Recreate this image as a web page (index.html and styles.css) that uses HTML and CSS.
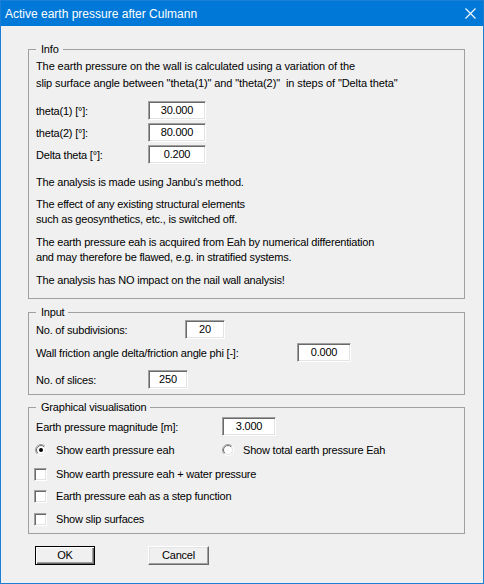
FILE: index.html
```html
<!DOCTYPE html>
<html>
<head>
<meta charset="utf-8">
<title>Active earth pressure after Culmann</title>
<link rel="stylesheet" href="styles.css">
</head>
<body>
<svg class="defs" width="0" height="0" aria-hidden="true">
  <defs>
    <linearGradient id="rOuter" x1="0" y1="0" x2="1" y2="1">
      <stop offset="0.45" stop-color="#a0a0a0"/>
      <stop offset="0.55" stop-color="#ffffff"/>
    </linearGradient>
    <linearGradient id="rInner" x1="0" y1="0" x2="1" y2="1">
      <stop offset="0.45" stop-color="#696969"/>
      <stop offset="0.55" stop-color="#e3e3e3"/>
    </linearGradient>
  </defs>
</svg>
<div class="window">
  <div class="titlebar">
    <span class="title">Active earth pressure after Culmann</span>
    <svg class="close" width="11" height="11" viewBox="0 0 11 11"><path d="M0.5 0.5L10.5 10.5M10.5 0.5L0.5 10.5" stroke="#fff" stroke-width="1.1" fill="none"/></svg>
  </div>
  <div class="client">
    <fieldset class="group info">
      <legend>Info</legend>
      <div class="para first">The earth pressure on the wall is calculated using a variation of the<br>slip surface angle between "theta(1)" and "theta(2)" &nbsp;in steps of "Delta theta"</div>
      <div class="row r1"><span class="label w112">theta(1) [°]:</span><span class="edit w58">30.000</span></div>
      <div class="row r2"><span class="label w112">theta(2) [°]:</span><span class="edit w58">80.000</span></div>
      <div class="row r2"><span class="label w112">Delta theta [°]:</span><span class="edit w58">0.200</span></div>
      <div class="para p-janbu">The analysis is made using Janbu's method.</div>
      <div class="para p7">The effect of any existing structural elements<br>such as geosynthetics, etc., is switched off.</div>
      <div class="para p8">The earth pressure eah is acquired from Eah by numerical differentiation<br>and may therefore be flawed, e.g. in stratified systems.</div>
      <div class="para p8">The analysis has NO impact on the nail wall analysis!</div>
    </fieldset>

    <fieldset class="group input">
      <legend>Input</legend>
      <div class="row i1"><span class="label w149">No. of subdivisions:</span><span class="edit w40">20</span></div>
      <div class="row i2"><span class="label w261">Wall friction angle delta/friction angle phi [-]:</span><span class="edit w54">0.000</span></div>
      <div class="row i3"><span class="label w112">No. of slices:</span><span class="edit w40">250</span></div>
    </fieldset>

    <fieldset class="group graph">
      <legend>Graphical visualisation</legend>
      <div class="row g1"><span class="label w186">Earth pressure magnitude [m]:</span><span class="edit w54">3.000</span></div>
      <div class="opt-row g2">
        <div class="radio-item first-radio">
          <svg class="radio" width="12" height="12" viewBox="0 0 12 12"><circle cx="6" cy="6" r="5.5" fill="none" stroke="url(#rOuter)"/><circle cx="6" cy="6" r="4.5" fill="#fff" stroke="url(#rInner)"/><circle cx="6" cy="6" r="2" fill="#000"/></svg>
          <span>Show earth pressure eah</span>
        </div>
        <div class="radio-item">
          <svg class="radio" width="12" height="12" viewBox="0 0 12 12"><circle cx="6" cy="6" r="5.5" fill="none" stroke="url(#rOuter)"/><circle cx="6" cy="6" r="4.5" fill="#fff" stroke="url(#rInner)"/></svg>
          <span>Show total earth pressure Eah</span>
        </div>
      </div>
      <div class="opt-row c1"><span class="check"></span><span>Show earth pressure eah + water pressure</span></div>
      <div class="opt-row c2"><span class="check"></span><span>Earth pressure eah as a step function</span></div>
      <div class="opt-row c3"><span class="check"></span><span>Show slip surfaces</span></div>
    </fieldset>

    <div class="buttons">
      <button class="btn default">OK</button>
      <button class="btn cancel">Cancel</button>
    </div>
  </div>
</div>
</body>
</html>
```

FILE: styles.css
```css
* { box-sizing: border-box; }
html, body { margin: 0; padding: 0; }
body {
  width: 484px;
  height: 584px;
  background: #f0f0f0;
  font-family: "Liberation Sans", Arial, sans-serif;
  font-size: 11px;
  letter-spacing: -0.2px;
  color: #000;
  overflow: hidden;
}
.defs { position: absolute; width: 0; height: 0; }

.window {
  width: 484px;
  height: 584px;
  border: 1px solid #1c7fd6;
  background: #f0f0f0;
  display: flex;
  flex-direction: column;
}
.titlebar {
  flex: none;
  height: 25px;
  background: #0078d7;
  color: #fff;
  display: flex;
  align-items: center;
  justify-content: space-between;
  padding: 0 7px 0 4px;
}
.title { font-size: 12px; letter-spacing: 0; }
.close { display: block; }

.client { padding: 17px 0 0 27px; }

.group {
  margin: 0;
  padding: 0 7px;
  width: 437px;
  min-inline-size: 0;
  border: 1px solid #a0a0a0;
}
.group legend {
  padding: 0 4px 0 5px;
  margin: 0;
  line-height: 13px;
}
.info { padding-bottom: 10px; }
.input { margin-top: 7px; padding-bottom: 5px; }
.graph { margin-top: 6px; padding-bottom: 6px; }

.para { line-height: 15px; margin-top: 8px; white-space: nowrap; }
.para.first { line-height: 17px; margin-top: 2px; letter-spacing: -0.1px; }
.para.p-janbu { margin-top: 11px; }
.para.p7 { margin-top: 7px; }

.row { display: flex; align-items: center; height: 19px; }
.r1 { margin-top: 9px; }
.r2 { margin-top: 3px; }
.i1 { margin-top: 1px; }
.i2 { margin-top: 4px; }
.i3 { margin-top: 8px; }
.g1 { margin-top: 3px; }

.label { flex: none; white-space: nowrap; }
.w112 { width: 112px; }
.w149 { width: 149px; }
.w186 { width: 186px; }
.w261 { width: 261px; }

.edit {
  flex: none;
  height: 19px;
  background: #fff;
  border: 1px solid;
  border-color: #a0a0a0 #ffffff #ffffff #a0a0a0;
  box-shadow: inset 1px 1px 0 #696969, inset -1px -1px 0 #e3e3e3;
  text-align: center;
  line-height: 17px;
}
.w58 { width: 58px; }
.w54 { width: 54px; }
.w40 { width: 40px; }

.opt-row { display: flex; align-items: center; height: 16px; }
.g2 { margin-top: 6px; }
.c1 { margin-top: 8px; }
.c2 { margin-top: 6px; }
.c3 { margin-top: 7px; }

.radio-item { display: flex; align-items: center; margin-left: -1px; }
.first-radio { width: 188px; }
.radio { flex: none; display: block; margin-right: 9px; }

.check {
  flex: none;
  width: 13px;
  height: 13px;
  margin-left: -2px;
  margin-right: 9px;
  background: #fff;
  border: 1px solid;
  border-color: #a0a0a0 #ffffff #ffffff #a0a0a0;
  box-shadow: inset 1px 1px 0 #696969, inset -1px -1px 0 #e3e3e3;
}

.buttons { display: flex; margin-top: 12px; padding-left: 7px; gap: 53px; }
.btn {
  font: inherit;
  letter-spacing: inherit;
  color: #000;
  height: 19px;
  padding: 0;
  background: #f0f0f0;
  border: 1px solid;
  border-radius: 0;
  line-height: 15px;
}
.btn.default {
  width: 60px;
  border-color: #000;
  box-shadow: inset 1px 1px 0 #fff, inset -1px -1px 0 #696969, inset -2px -2px 0 #a0a0a0;
}
.btn.cancel {
  width: 61px;
  border-color: #fff #696969 #696969 #fff;
  box-shadow: inset -1px -1px 0 #a0a0a0, inset 1px 1px 0 #e3e3e3;
}
```
